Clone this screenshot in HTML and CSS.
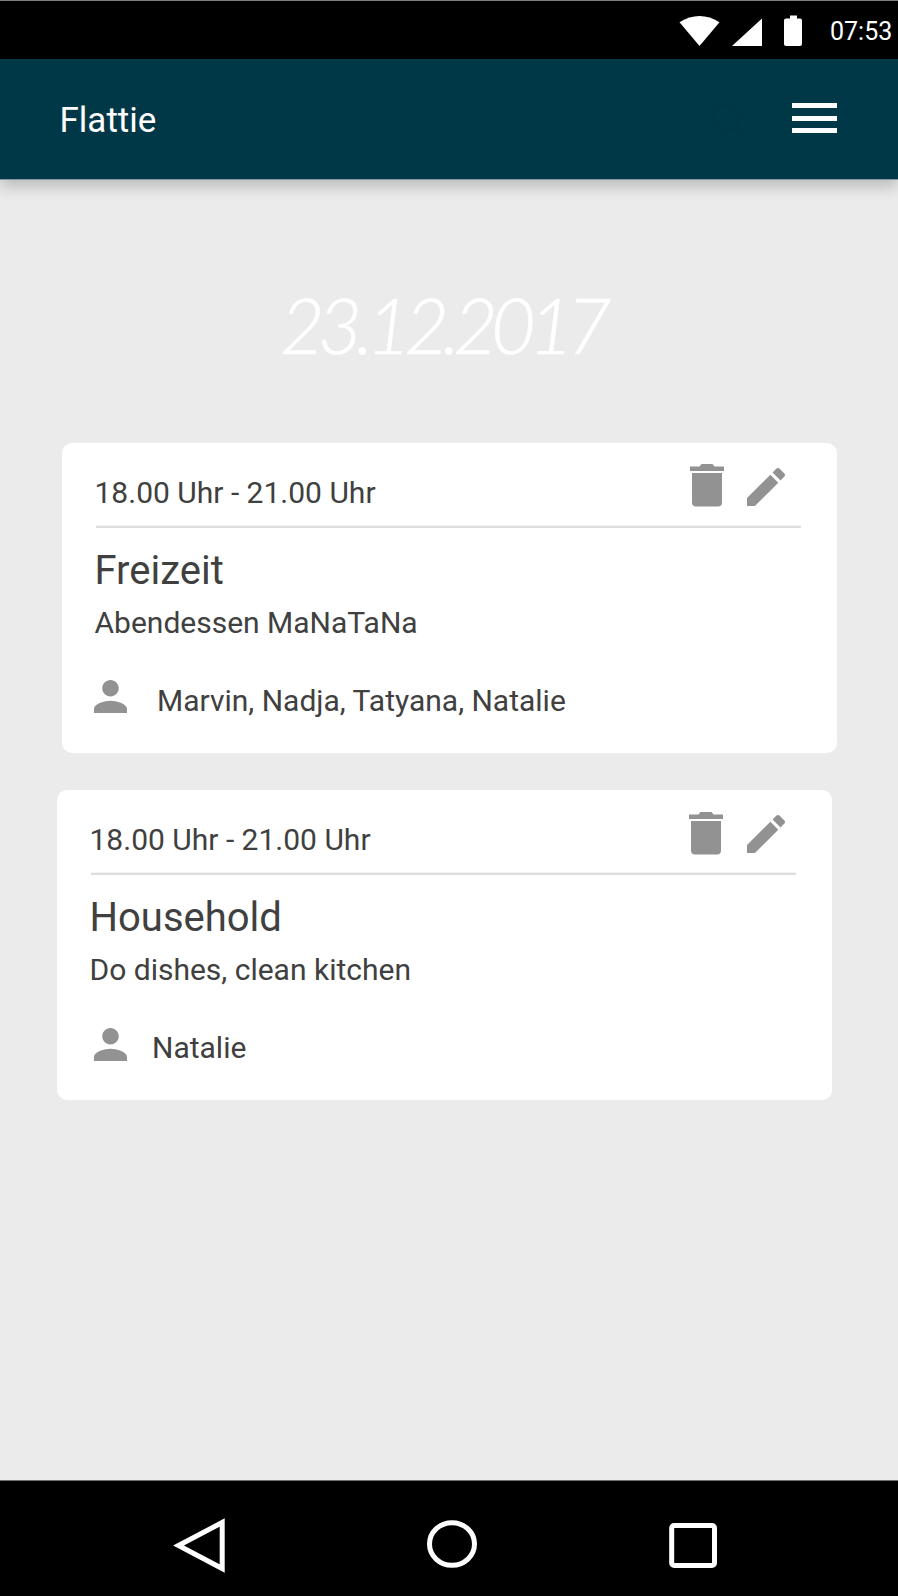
FILE: index.html
```html
<!DOCTYPE html>
<html lang="de">
<head>
<meta charset="utf-8">
<title>Flattie</title>
<link rel="stylesheet" href="styles.css">
</head>
<body>
<div class="screen">
  <div class="status">
    <svg class="status-icons" viewBox="0 0 124 32" aria-hidden="true">
      <path d="M-.500 7.300Q19.500-5.500 39.500 7.300L19.500 31Z"/>
      <path d="M52 31L82 3.500V31Z"/>
      <path d="M110 .500h7v3h3q2 0 2 2v23.500q0 2-2 2h-14q-2 0-2-2V5.500q0-2 2-2h4z"/>
    </svg>
    <span class="clock">07:53</span>
  </div>
  <header class="appbar">
    <h1 class="brand">Flattie</h1>
    <div class="actions">
      <svg class="search" viewBox="0 0 40 42" aria-hidden="true"><circle cx="15" cy="16" r="13"/><path d="M24 26L38 41"/></svg>
      <div class="menu"><i></i><i></i><i></i></div>
    </div>
  </header>
  <main class="content">
    <h2 class="date">23.12.2017</h2>
    <article class="card">
      <div class="card-head">
        <span class="time">18.00 Uhr - 21.00 Uhr</span>
        <svg class="trash" viewBox="0 0 34 43"><path d="M0 2.500H9.500L11.500 0H22.500L24.500 2.500H34V7H0ZM2 9H32V38.500Q32 42.500 28 42.500H6Q2 42.500 2 38.500Z"/></svg>
        <svg class="pencil" viewBox="3 3 18 18"><path d="M3 17.250V21h3.750L17.810 9.940l-3.750-3.750L3 17.250zM20.710 7.040c.39-.39.39-1.020 0-1.410l-2.340-2.340c-.39-.39-1.020-.39-1.410 0l-1.830 1.830 3.750 3.750 1.830-1.830z"/></svg>
      </div>
      <h3 class="title">Freizeit</h3>
      <p class="desc">Abendessen MaNaTaNa</p>
      <div class="people">
        <svg class="person" viewBox="4 4 16 16"><path d="M12 12c2.210 0 4-1.790 4-4s-1.790-4-4-4-4 1.790-4 4 1.790 4 4 4zm0 2c-2.670 0-8 1.340-8 4v2h16v-2c0-2.660-5.330-4-8-4z"/></svg>
        <span class="names">Marvin, Nadja, Tatyana, Natalie</span>
      </div>
    </article>
    <article class="card card-household">
      <div class="card-head">
        <span class="time">18.00 Uhr - 21.00 Uhr</span>
        <svg class="trash" viewBox="0 0 34 43"><path d="M0 2.500H9.500L11.500 0H22.500L24.500 2.500H34V7H0ZM2 9H32V38.500Q32 42.500 28 42.500H6Q2 42.500 2 38.500Z"/></svg>
        <svg class="pencil" viewBox="3 3 18 18"><path d="M3 17.250V21h3.750L17.810 9.940l-3.750-3.750L3 17.250zM20.710 7.040c.39-.39.39-1.020 0-1.410l-2.340-2.340c-.39-.39-1.020-.39-1.410 0l-1.830 1.830 3.750 3.750 1.830-1.830z"/></svg>
      </div>
      <h3 class="title">Household</h3>
      <p class="desc">Do dishes, clean kitchen</p>
      <div class="people">
        <svg class="person" viewBox="4 4 16 16"><path d="M12 12c2.210 0 4-1.790 4-4s-1.790-4-4-4-4 1.790-4 4 1.790 4 4 4zm0 2c-2.670 0-8 1.340-8 4v2h16v-2c0-2.660-5.330-4-8-4z"/></svg>
        <span class="names">Natalie</span>
      </div>
    </article>
  </main>
  <nav class="navbar">
    <svg class="nav-back" viewBox="0 0 52 55"><path d="M5.500 27.500L49.200 4.500V50.500Z"/></svg>
    <svg class="nav-home" viewBox="0 0 50 48"><ellipse cx="25" cy="24" rx="22.500" ry="21.300"/></svg>
    <svg class="nav-recent" viewBox="0 0 48 45"><rect x="2.700" y="2.500" width="42.800" height="40" rx="2.500"/></svg>
  </nav>
</div>
</body>
</html>
```
FILE: styles.css
```css
* { box-sizing: border-box; }
body { margin: 0; background: #ebebeb; color: #404040; font-family: Roboto, sans-serif; }
h1, h2, h3, p { margin: 0; font-weight: 400; }
svg { display: block; flex: none; }
.screen { width: 898px; height: 1596px; display: flex; flex-direction: column; overflow: hidden; }

.status { height: 59px; flex: none; background: #000; border-top: 1px solid #7f7f7f; display: flex; justify-content: flex-end; padding: 14px 6px 0 0; color: #fff; }
.status-icons { width: 124px; height: 32px; fill: #fff; margin-right: 26px; overflow: visible; }
.clock { width: 62px; font-size: 25px; line-height: 34px; white-space: nowrap; }

.appbar { height: 121px; flex: none; background: #003848; box-shadow: 0 7px 14px rgba(0, 0, 0, .2); border-bottom: 1px solid #8098a2; display: flex; justify-content: space-between; padding: 0 61px 0 59.500px; color: #fff; }
.brand { font-size: 35px; line-height: 42px; padding-top: 41px; }
.actions { display: flex; padding-top: 43px; }
.search { width: 40px; height: 42px; margin-right: 41px; fill: none; stroke: #003747; stroke-width: 3; }
.menu { width: 45px; height: 31px; display: flex; flex-direction: column; gap: 7.500px; padding-top: 1px; }
.menu i { height: 5px; background: #fff; }

.content { flex: 1; padding: 103px 61px 0 62px; }
.date { height: 160px; padding-left: 218px; font: italic 300 77px/82px Lato, sans-serif; letter-spacing: -6.800px; white-space: nowrap; color: #fff; -webkit-text-stroke: .6px #fff; }

.card { width: 775px; height: 310px; background: #fff; border-radius: 10px; padding: 0 36px 0 32.500px; }
.card-head { height: 85px; margin-left: 1.500px; border-bottom: 2px solid #dedede; box-shadow: 0 -1px #f3f3f3 inset; display: flex; align-items: flex-start; }
.time { flex: 1; margin-left: -1.500px; padding-top: 32px; font-size: 30px; line-height: 36px; }
.trash { width: 34px; height: 43px; margin: 21px 23px 0 0; }
.pencil { width: 38px; height: 38px; margin: 25px 16px 0 0; }
.trash, .pencil, .person { fill: #929292; }
.title { font-size: 40px; line-height: 48px; padding-top: 19px; }
.desc { font-size: 30px; line-height: 36px; padding-top: 10px; }
.people { display: flex; align-items: flex-start; margin-top: 39px; }
.person { width: 33px; height: 33px; margin: 0 .5px 0 -.5px; }
.names { font-size: 30px; line-height: 36px; margin: 3px 0 0 29.500px; }

.card-household { margin: 37.400px 0 0 -5px; }
.card-household .trash { margin: 21.600px 24px 0 0; }
.card-household .pencil { margin: 25px 11px 0 0; }
.card-household .person { margin: .6px .5px 0 4.500px; }
.card-household .names { margin: 3px 0 0 24.500px; }

.navbar { height: 116px; flex: none; background: #000; border-top: 1px solid #707070; display: flex; align-items: flex-start; fill: none; stroke: #fff; stroke-width: 5; padding-left: 173px; }
.nav-back { width: 52px; height: 55px; margin-top: 37px; }
.nav-home { width: 50px; height: 48px; margin: 39px 0 0 202px; }
.nav-recent { width: 48px; height: 45px; margin: 42px 0 0 192px; }
```
